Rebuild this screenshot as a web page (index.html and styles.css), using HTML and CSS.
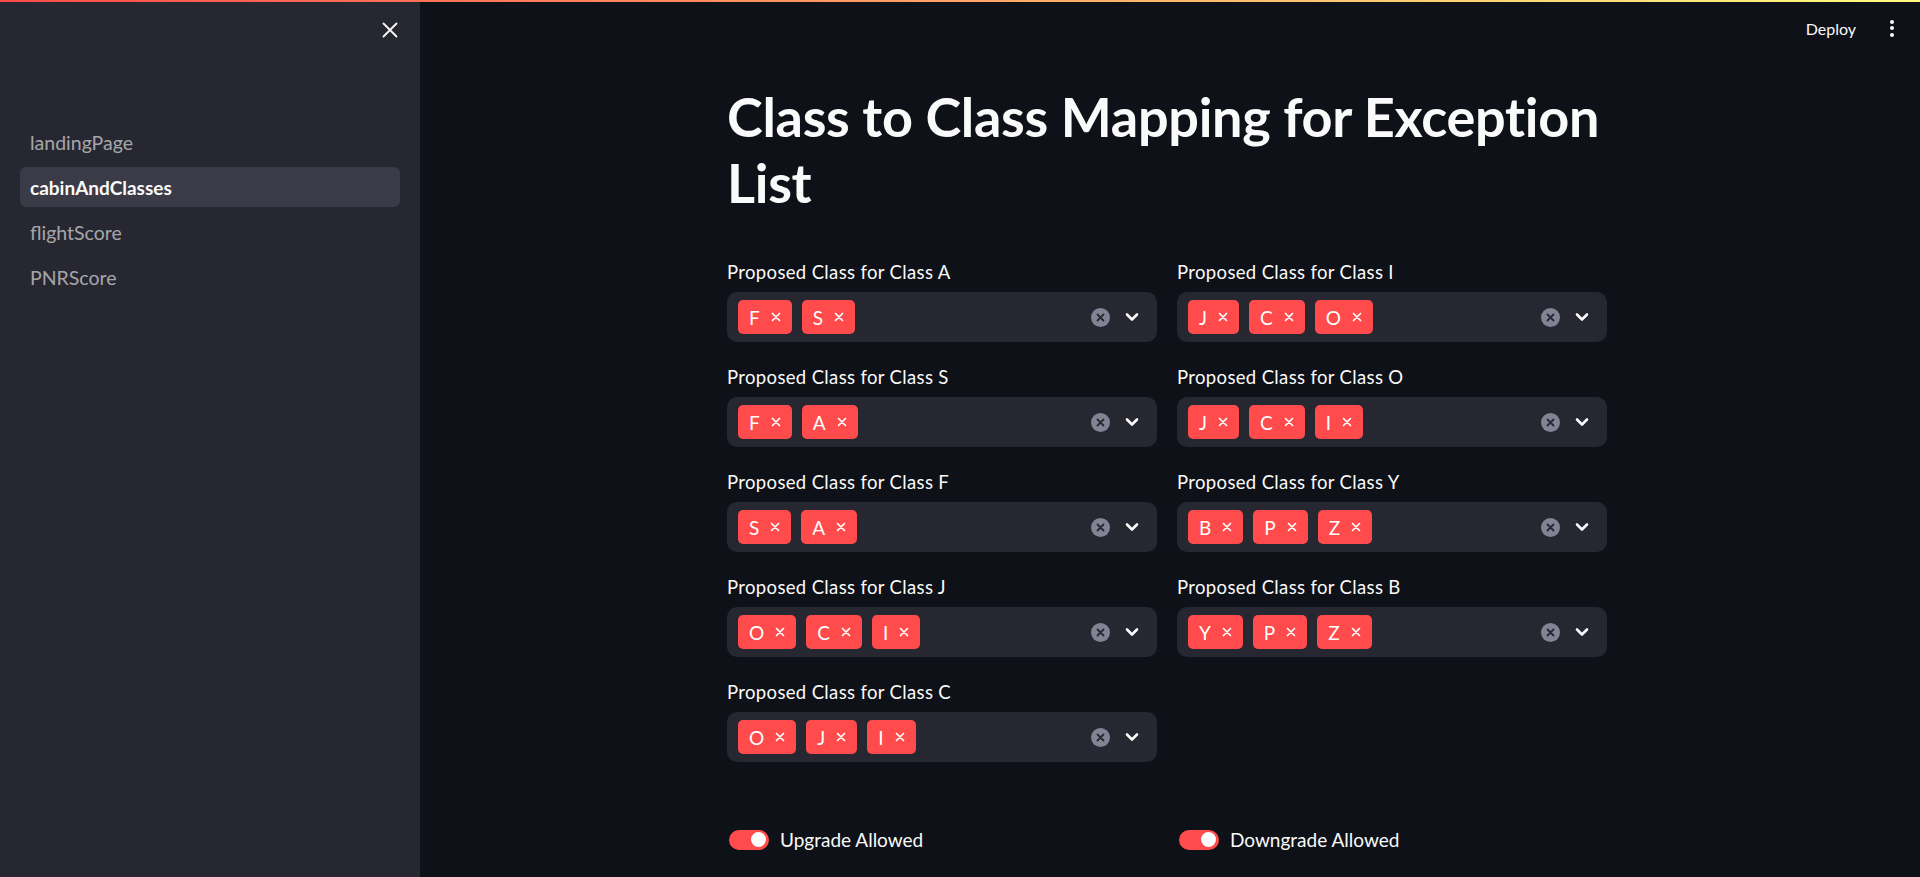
FILE: index.html
```html
<!DOCTYPE html>
<html lang="en">
<head>
<meta charset="utf-8">
<title>cabinAndClasses</title>
<link rel="stylesheet" href="styles.css">
</head>
<body>
<div class="decoration"></div>
<aside class="sidebar">
  <div class="sidebar-top">
    <button class="close-btn" aria-label="Close sidebar">
      <svg width="16" height="16" viewBox="0 0 16 16"><path d="M1.5 1.5 L14.5 14.5 M14.5 1.5 L1.5 14.5" stroke="#fafafa" stroke-width="1.8" stroke-linecap="round"/></svg>
    </button>
  </div>
  <nav class="nav">
    <a class="nav-item">landingPage</a>
    <a class="nav-item active">cabinAndClasses</a>
    <a class="nav-item">flightScore</a>
    <a class="nav-item">PNRScore</a>
  </nav>
</aside>
<main class="main">
  <header class="header">
    <span class="deploy">Deploy</span>
    <span class="kebab"><i></i><i></i><i></i></span>
  </header>
  <section class="block">
    <h1 class="title">Class to Class Mapping for Exception List</h1>
    <div class="columns">
      <div class="col">
        <div class="field"><label class="label">Proposed Class for Class A</label>
          <div class="select"><div class="tags"><span class="tag">F<svg class="tx" width="10" height="10" viewBox="0 0 10 10"><path d="M1.5 1.5 L8.5 8.5 M8.5 1.5 L1.5 8.5" stroke="#fff" stroke-width="1.7" stroke-linecap="round"/></svg></span><span class="tag">S<svg class="tx" width="10" height="10" viewBox="0 0 10 10"><path d="M1.5 1.5 L8.5 8.5 M8.5 1.5 L1.5 8.5" stroke="#fff" stroke-width="1.7" stroke-linecap="round"/></svg></span></div><span class="clear"><svg width="19" height="19" viewBox="0 0 19 19"><circle cx="9.5" cy="9.5" r="9.5" fill="#808495"/><path d="M6.5 6.5 L12.5 12.5 M12.5 6.5 L6.5 12.5" stroke="#262730" stroke-width="1.8" stroke-linecap="round"/></svg></span><span class="chev"><svg width="14" height="10" viewBox="0 0 14 10"><path d="M2 2.5 L7 7.5 L12 2.5" fill="none" stroke="#fafafa" stroke-width="2.6" stroke-linecap="round" stroke-linejoin="round"/></svg></span></div></div>
        <div class="field"><label class="label">Proposed Class for Class S</label>
          <div class="select"><div class="tags"><span class="tag">F<svg class="tx" width="10" height="10" viewBox="0 0 10 10"><path d="M1.5 1.5 L8.5 8.5 M8.5 1.5 L1.5 8.5" stroke="#fff" stroke-width="1.7" stroke-linecap="round"/></svg></span><span class="tag">A<svg class="tx" width="10" height="10" viewBox="0 0 10 10"><path d="M1.5 1.5 L8.5 8.5 M8.5 1.5 L1.5 8.5" stroke="#fff" stroke-width="1.7" stroke-linecap="round"/></svg></span></div><span class="clear"><svg width="19" height="19" viewBox="0 0 19 19"><circle cx="9.5" cy="9.5" r="9.5" fill="#808495"/><path d="M6.5 6.5 L12.5 12.5 M12.5 6.5 L6.5 12.5" stroke="#262730" stroke-width="1.8" stroke-linecap="round"/></svg></span><span class="chev"><svg width="14" height="10" viewBox="0 0 14 10"><path d="M2 2.5 L7 7.5 L12 2.5" fill="none" stroke="#fafafa" stroke-width="2.6" stroke-linecap="round" stroke-linejoin="round"/></svg></span></div></div>
        <div class="field"><label class="label">Proposed Class for Class F</label>
          <div class="select"><div class="tags"><span class="tag">S<svg class="tx" width="10" height="10" viewBox="0 0 10 10"><path d="M1.5 1.5 L8.5 8.5 M8.5 1.5 L1.5 8.5" stroke="#fff" stroke-width="1.7" stroke-linecap="round"/></svg></span><span class="tag">A<svg class="tx" width="10" height="10" viewBox="0 0 10 10"><path d="M1.5 1.5 L8.5 8.5 M8.5 1.5 L1.5 8.5" stroke="#fff" stroke-width="1.7" stroke-linecap="round"/></svg></span></div><span class="clear"><svg width="19" height="19" viewBox="0 0 19 19"><circle cx="9.5" cy="9.5" r="9.5" fill="#808495"/><path d="M6.5 6.5 L12.5 12.5 M12.5 6.5 L6.5 12.5" stroke="#262730" stroke-width="1.8" stroke-linecap="round"/></svg></span><span class="chev"><svg width="14" height="10" viewBox="0 0 14 10"><path d="M2 2.5 L7 7.5 L12 2.5" fill="none" stroke="#fafafa" stroke-width="2.6" stroke-linecap="round" stroke-linejoin="round"/></svg></span></div></div>
        <div class="field"><label class="label">Proposed Class for Class J</label>
          <div class="select"><div class="tags"><span class="tag">O<svg class="tx" width="10" height="10" viewBox="0 0 10 10"><path d="M1.5 1.5 L8.5 8.5 M8.5 1.5 L1.5 8.5" stroke="#fff" stroke-width="1.7" stroke-linecap="round"/></svg></span><span class="tag">C<svg class="tx" width="10" height="10" viewBox="0 0 10 10"><path d="M1.5 1.5 L8.5 8.5 M8.5 1.5 L1.5 8.5" stroke="#fff" stroke-width="1.7" stroke-linecap="round"/></svg></span><span class="tag">I<svg class="tx" width="10" height="10" viewBox="0 0 10 10"><path d="M1.5 1.5 L8.5 8.5 M8.5 1.5 L1.5 8.5" stroke="#fff" stroke-width="1.7" stroke-linecap="round"/></svg></span></div><span class="clear"><svg width="19" height="19" viewBox="0 0 19 19"><circle cx="9.5" cy="9.5" r="9.5" fill="#808495"/><path d="M6.5 6.5 L12.5 12.5 M12.5 6.5 L6.5 12.5" stroke="#262730" stroke-width="1.8" stroke-linecap="round"/></svg></span><span class="chev"><svg width="14" height="10" viewBox="0 0 14 10"><path d="M2 2.5 L7 7.5 L12 2.5" fill="none" stroke="#fafafa" stroke-width="2.6" stroke-linecap="round" stroke-linejoin="round"/></svg></span></div></div>
        <div class="field"><label class="label">Proposed Class for Class C</label>
          <div class="select"><div class="tags"><span class="tag">O<svg class="tx" width="10" height="10" viewBox="0 0 10 10"><path d="M1.5 1.5 L8.5 8.5 M8.5 1.5 L1.5 8.5" stroke="#fff" stroke-width="1.7" stroke-linecap="round"/></svg></span><span class="tag">J<svg class="tx" width="10" height="10" viewBox="0 0 10 10"><path d="M1.5 1.5 L8.5 8.5 M8.5 1.5 L1.5 8.5" stroke="#fff" stroke-width="1.7" stroke-linecap="round"/></svg></span><span class="tag">I<svg class="tx" width="10" height="10" viewBox="0 0 10 10"><path d="M1.5 1.5 L8.5 8.5 M8.5 1.5 L1.5 8.5" stroke="#fff" stroke-width="1.7" stroke-linecap="round"/></svg></span></div><span class="clear"><svg width="19" height="19" viewBox="0 0 19 19"><circle cx="9.5" cy="9.5" r="9.5" fill="#808495"/><path d="M6.5 6.5 L12.5 12.5 M12.5 6.5 L6.5 12.5" stroke="#262730" stroke-width="1.8" stroke-linecap="round"/></svg></span><span class="chev"><svg width="14" height="10" viewBox="0 0 14 10"><path d="M2 2.5 L7 7.5 L12 2.5" fill="none" stroke="#fafafa" stroke-width="2.6" stroke-linecap="round" stroke-linejoin="round"/></svg></span></div></div>
      </div>
      <div class="col">
        <div class="field"><label class="label">Proposed Class for Class I</label>
          <div class="select"><div class="tags"><span class="tag">J<svg class="tx" width="10" height="10" viewBox="0 0 10 10"><path d="M1.5 1.5 L8.5 8.5 M8.5 1.5 L1.5 8.5" stroke="#fff" stroke-width="1.7" stroke-linecap="round"/></svg></span><span class="tag">C<svg class="tx" width="10" height="10" viewBox="0 0 10 10"><path d="M1.5 1.5 L8.5 8.5 M8.5 1.5 L1.5 8.5" stroke="#fff" stroke-width="1.7" stroke-linecap="round"/></svg></span><span class="tag">O<svg class="tx" width="10" height="10" viewBox="0 0 10 10"><path d="M1.5 1.5 L8.5 8.5 M8.5 1.5 L1.5 8.5" stroke="#fff" stroke-width="1.7" stroke-linecap="round"/></svg></span></div><span class="clear"><svg width="19" height="19" viewBox="0 0 19 19"><circle cx="9.5" cy="9.5" r="9.5" fill="#808495"/><path d="M6.5 6.5 L12.5 12.5 M12.5 6.5 L6.5 12.5" stroke="#262730" stroke-width="1.8" stroke-linecap="round"/></svg></span><span class="chev"><svg width="14" height="10" viewBox="0 0 14 10"><path d="M2 2.5 L7 7.5 L12 2.5" fill="none" stroke="#fafafa" stroke-width="2.6" stroke-linecap="round" stroke-linejoin="round"/></svg></span></div></div>
        <div class="field"><label class="label">Proposed Class for Class O</label>
          <div class="select"><div class="tags"><span class="tag">J<svg class="tx" width="10" height="10" viewBox="0 0 10 10"><path d="M1.5 1.5 L8.5 8.5 M8.5 1.5 L1.5 8.5" stroke="#fff" stroke-width="1.7" stroke-linecap="round"/></svg></span><span class="tag">C<svg class="tx" width="10" height="10" viewBox="0 0 10 10"><path d="M1.5 1.5 L8.5 8.5 M8.5 1.5 L1.5 8.5" stroke="#fff" stroke-width="1.7" stroke-linecap="round"/></svg></span><span class="tag">I<svg class="tx" width="10" height="10" viewBox="0 0 10 10"><path d="M1.5 1.5 L8.5 8.5 M8.5 1.5 L1.5 8.5" stroke="#fff" stroke-width="1.7" stroke-linecap="round"/></svg></span></div><span class="clear"><svg width="19" height="19" viewBox="0 0 19 19"><circle cx="9.5" cy="9.5" r="9.5" fill="#808495"/><path d="M6.5 6.5 L12.5 12.5 M12.5 6.5 L6.5 12.5" stroke="#262730" stroke-width="1.8" stroke-linecap="round"/></svg></span><span class="chev"><svg width="14" height="10" viewBox="0 0 14 10"><path d="M2 2.5 L7 7.5 L12 2.5" fill="none" stroke="#fafafa" stroke-width="2.6" stroke-linecap="round" stroke-linejoin="round"/></svg></span></div></div>
        <div class="field"><label class="label">Proposed Class for Class Y</label>
          <div class="select"><div class="tags"><span class="tag">B<svg class="tx" width="10" height="10" viewBox="0 0 10 10"><path d="M1.5 1.5 L8.5 8.5 M8.5 1.5 L1.5 8.5" stroke="#fff" stroke-width="1.7" stroke-linecap="round"/></svg></span><span class="tag">P<svg class="tx" width="10" height="10" viewBox="0 0 10 10"><path d="M1.5 1.5 L8.5 8.5 M8.5 1.5 L1.5 8.5" stroke="#fff" stroke-width="1.7" stroke-linecap="round"/></svg></span><span class="tag">Z<svg class="tx" width="10" height="10" viewBox="0 0 10 10"><path d="M1.5 1.5 L8.5 8.5 M8.5 1.5 L1.5 8.5" stroke="#fff" stroke-width="1.7" stroke-linecap="round"/></svg></span></div><span class="clear"><svg width="19" height="19" viewBox="0 0 19 19"><circle cx="9.5" cy="9.5" r="9.5" fill="#808495"/><path d="M6.5 6.5 L12.5 12.5 M12.5 6.5 L6.5 12.5" stroke="#262730" stroke-width="1.8" stroke-linecap="round"/></svg></span><span class="chev"><svg width="14" height="10" viewBox="0 0 14 10"><path d="M2 2.5 L7 7.5 L12 2.5" fill="none" stroke="#fafafa" stroke-width="2.6" stroke-linecap="round" stroke-linejoin="round"/></svg></span></div></div>
        <div class="field"><label class="label">Proposed Class for Class B</label>
          <div class="select"><div class="tags"><span class="tag">Y<svg class="tx" width="10" height="10" viewBox="0 0 10 10"><path d="M1.5 1.5 L8.5 8.5 M8.5 1.5 L1.5 8.5" stroke="#fff" stroke-width="1.7" stroke-linecap="round"/></svg></span><span class="tag">P<svg class="tx" width="10" height="10" viewBox="0 0 10 10"><path d="M1.5 1.5 L8.5 8.5 M8.5 1.5 L1.5 8.5" stroke="#fff" stroke-width="1.7" stroke-linecap="round"/></svg></span><span class="tag">Z<svg class="tx" width="10" height="10" viewBox="0 0 10 10"><path d="M1.5 1.5 L8.5 8.5 M8.5 1.5 L1.5 8.5" stroke="#fff" stroke-width="1.7" stroke-linecap="round"/></svg></span></div><span class="clear"><svg width="19" height="19" viewBox="0 0 19 19"><circle cx="9.5" cy="9.5" r="9.5" fill="#808495"/><path d="M6.5 6.5 L12.5 12.5 M12.5 6.5 L6.5 12.5" stroke="#262730" stroke-width="1.8" stroke-linecap="round"/></svg></span><span class="chev"><svg width="14" height="10" viewBox="0 0 14 10"><path d="M2 2.5 L7 7.5 L12 2.5" fill="none" stroke="#fafafa" stroke-width="2.6" stroke-linecap="round" stroke-linejoin="round"/></svg></span></div></div>
      </div>
    </div>
    <div class="toggles">
      <div class="toggle-wrap"><span class="toggle"><span class="knob"></span></span><span class="toggle-label">Upgrade Allowed</span></div>
      <div class="toggle-wrap"><span class="toggle"><span class="knob"></span></span><span class="toggle-label">Downgrade Allowed</span></div>
    </div>
  </section>
</main>
</body>
</html>
```
FILE: styles.css
```css
* { box-sizing: border-box; }
html, body { margin: 0; padding: 0; }
body {
  width: 1920px;
  height: 877px;
  overflow: hidden;
  display: flex;
  background: #0e1117;
  color: #fafafa;
  font-family: "Lato", "Noto Sans", sans-serif;
}
.decoration {
  position: absolute;
  top: 0; left: 0; right: 0;
  height: 2px;
  background: linear-gradient(90deg, #ff4b4b, #fffd80);
  z-index: 10;
}
.sidebar {
  width: 420px;
  flex: none;
  background: #262730;
  padding: 0 20px;
}
.sidebar-top {
  height: 60px;
  display: flex;
  justify-content: flex-end;
  align-items: center;
}
.close-btn {
  background: none;
  border: 0;
  padding: 0;
  width: 24px;
  height: 24px;
  display: flex;
  align-items: center;
  justify-content: center;
  margin-right: -2px;
}
.nav {
  margin-top: 62px;
  display: flex;
  flex-direction: column;
  gap: 5px;
}
.nav-item {
  height: 40px;
  display: flex;
  align-items: center;
  padding-left: 10px;
  border-radius: 6px;
  font-size: 19.5px;
  color: rgba(250, 250, 250, 0.62);
}
.nav-item.active {
  background: #3a3b46;
  color: #fafafa;
  font-weight: 700;
  font-size: 19px;
}
.main {
  flex: 1;
  min-width: 0;
  display: flex;
  flex-direction: column;
  padding-right: 6px;
}
.header {
  height: 60px;
  display: flex;
  justify-content: flex-end;
  align-items: center;
  padding-right: 26px;
  gap: 34px;
  margin-right: -6px;
}
.deploy {
  font-size: 16px;
  color: #fafafa;
  margin-top: -4px;
}
.kebab {
  display: flex;
  flex-direction: column;
  gap: 2.5px;
  margin-top: -4px;
}
.kebab i {
  display: block;
  width: 4px;
  height: 4px;
  border-radius: 50%;
  background: #fafafa;
}
.block {
  width: 880px;
  margin: 0 auto;
  padding-top: 24px;
}
.title {
  margin: 0 0 41px;
  font-size: 54px;
  line-height: 66px;
  font-weight: 700;
  color: #fafafa;
  letter-spacing: -0.3px;
}
.columns {
  display: grid;
  grid-template-columns: 1fr 1fr;
  gap: 20px;
  align-items: start;
}
.col {
  display: flex;
  flex-direction: column;
  gap: 20px;
}
.field {
  display: flex;
  flex-direction: column;
}
.label {
  height: 30px;
  margin-bottom: 5px;
  display: flex;
  align-items: center;
  font-size: 18.5px;
  letter-spacing: 0.35px;
  color: #fafafa;
}
.select {
  height: 50px;
  background: #262730;
  border-radius: 10px;
  display: flex;
  align-items: center;
  padding-left: 11px;
  padding-right: 18px;
}
.tags {
  flex: 1;
  display: flex;
  gap: 10px;
}
.tag {
  height: 34px;
  background: #ff4b4b;
  border-radius: 5px;
  display: inline-flex;
  align-items: center;
  padding: 0 11px 0 11px;
  font-size: 19px;
  color: #fff;
}
.tx {
  margin-left: 11px;
}
.clear {
  display: flex;
  margin-right: 15px;
}
.chev {
  display: flex;
}
.toggles {
  margin-top: 66px;
  display: grid;
  grid-template-columns: 1fr 1fr;
  gap: 20px;
}
.toggle-wrap {
  display: flex;
  align-items: center;
  gap: 11px;
  padding-left: 2px;
}
.toggle {
  width: 40px;
  height: 20px;
  border-radius: 10px;
  background: #ff4b4b;
  display: flex;
  align-items: center;
  justify-content: flex-end;
  padding-right: 3px;
}
.knob {
  width: 15px;
  height: 15px;
  border-radius: 50%;
  background: #fff;
}
.toggle-label {
  font-size: 19px;
  color: #fafafa;
}
```
